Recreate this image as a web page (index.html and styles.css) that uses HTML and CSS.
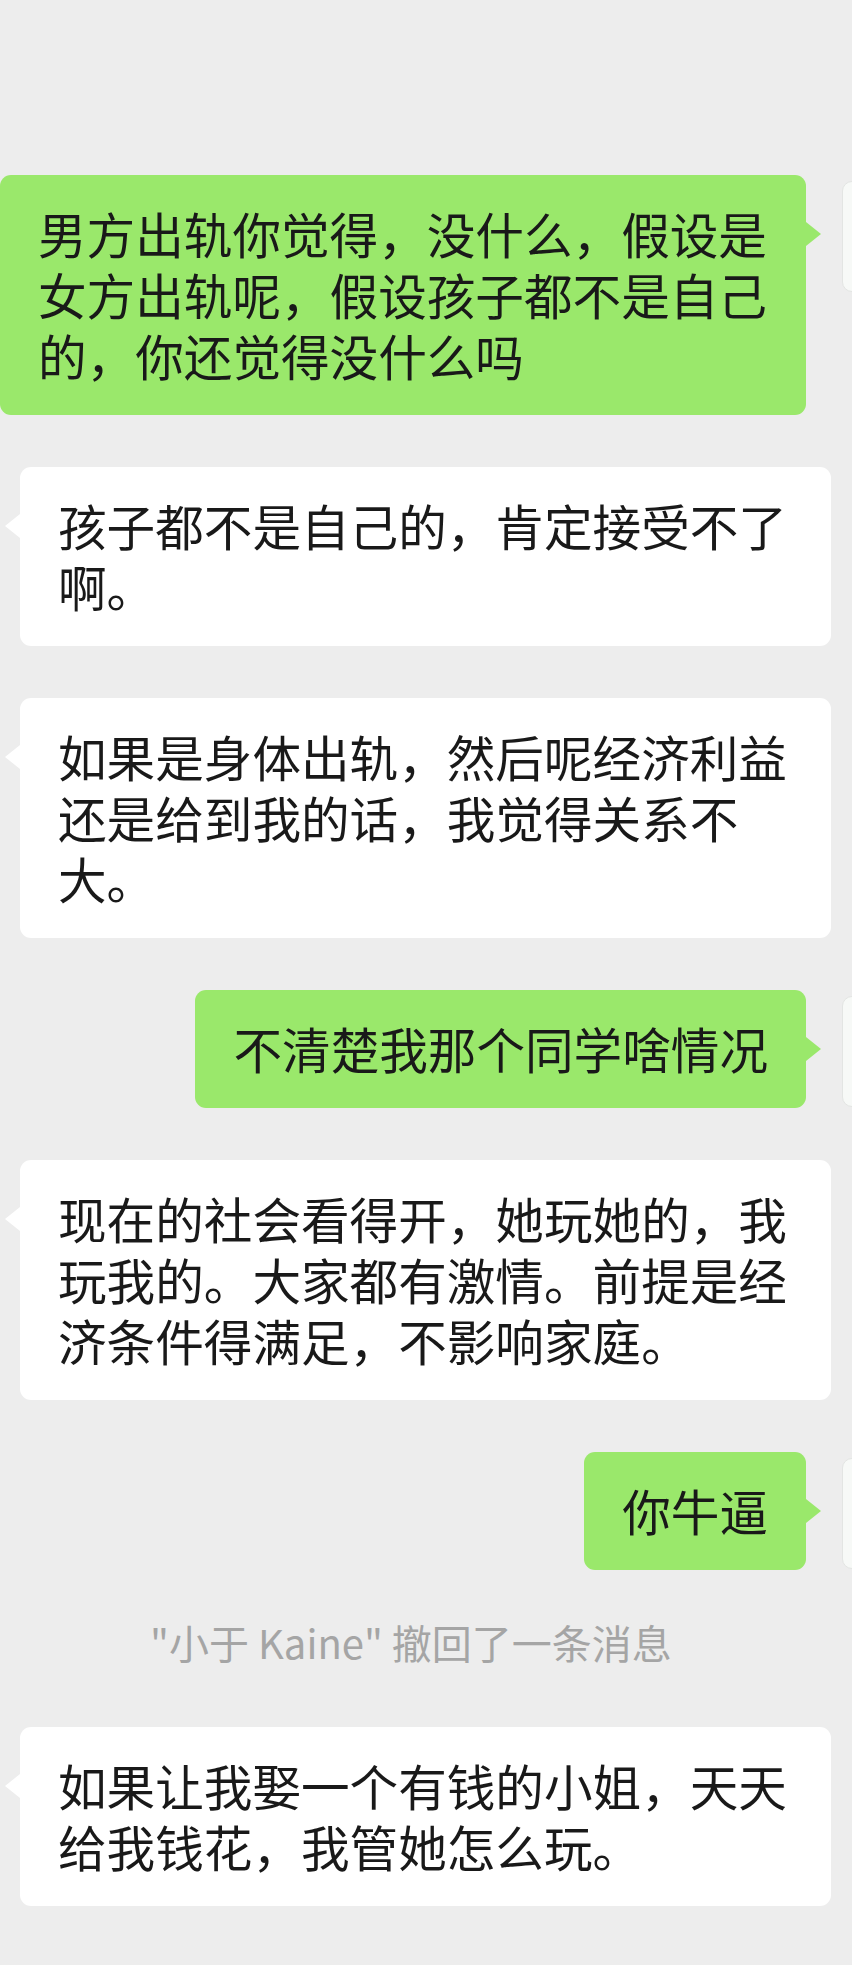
FILE: index.html
```html
<!DOCTYPE html>
<html>
	<head>
		<meta charset="utf-8">
		<title>聊天记录</title>
		<link rel="stylesheet" href="styles.css">
	</head>

	<body>
		<div id="chat">

			<div class="row mine">
				<div class="bubble">男方出轨你觉得，没什么，假设是女方出轨呢，假设孩子都不是自己的，你还觉得没什么吗</div>
				<div class="avatar"></div>
			</div>

			<div class="row theirs">
				<div class="bubble">孩子都不是自己的，肯定接受不了啊。</div>
			</div>

			<div class="row theirs">
				<div class="bubble">如果是身体出轨，然后呢经济利益还是给到我的话，我觉得关系不大。</div>
			</div>

			<div class="row mine">
				<div class="bubble">不清楚我那个同学啥情况</div>
				<div class="avatar"></div>
			</div>

			<div class="row theirs">
				<div class="bubble">现在的社会看得开，她玩她的，我玩我的。大家都有激情。前提是经济条件得满足，不影响家庭。</div>
			</div>

			<div class="row mine">
				<div class="bubble">你牛逼</div>
				<div class="avatar"></div>
			</div>

			<!-- system notice -->
			<div class="recall">"小于 Kaine" 撤回了一条消息</div>

			<div class="row theirs">
				<div class="bubble">如果让我娶一个有钱的小姐，天天给我钱花，我管她怎么玩。</div>
			</div>

		</div>
	</body>

</html>
```

FILE: styles.css
```css
body {
	margin: 0;
	background-color: #ededed;
	overflow: hidden;
	font-family: "Noto Sans CJK SC", Roboto, sans-serif;
}

#chat {
	display: flex;
	flex-direction: column;
	gap: 52px;
	padding-top: 175px;
}

div.row {
	display: flex;
	align-items: flex-start;
}

/* my messages sit on the right, avatar is cut by the screen edge */
div.row.mine {
	justify-content: flex-end;
	gap: 36px;
	margin-right: -101px;
}

div.row.theirs {
	padding-left: 20px;
}

div.bubble {
	position: relative;
	max-width: 735px;
	padding: 28px 38px 29px;
	border-radius: 11px;
	background-color: #ffffff;
	color: #191919;
	font-size: 48.6px;
	line-height: 61px;
}

div.mine div.bubble {
	background-color: #9ae86b;
}

/* little arrow next to the bubble */
div.bubble::after {
	content: '';
	position: absolute;
	top: 47px;
	border-top: 12px solid transparent;
	border-bottom: 12px solid transparent;
}

div.mine div.bubble::after {
	right: -15px;
	border-left: 15px solid #9ae86b;
}

div.theirs div.bubble::after {
	left: -15px;
	border-right: 15px solid #ffffff;
}

div.avatar {
	flex-shrink: 0;
	width: 109px;
	height: 109px;
	margin-top: 6px;
	border: 1px solid #e3e5e3;
	border-radius: 10px;
	background-color: #f7f9f7;
}

div.recall {
	padding-right: 30px;
	margin-bottom: 13px;
	text-align: center;
	color: #a5a5a5;
	font-size: 40px;
	line-height: 40px;
}
```
